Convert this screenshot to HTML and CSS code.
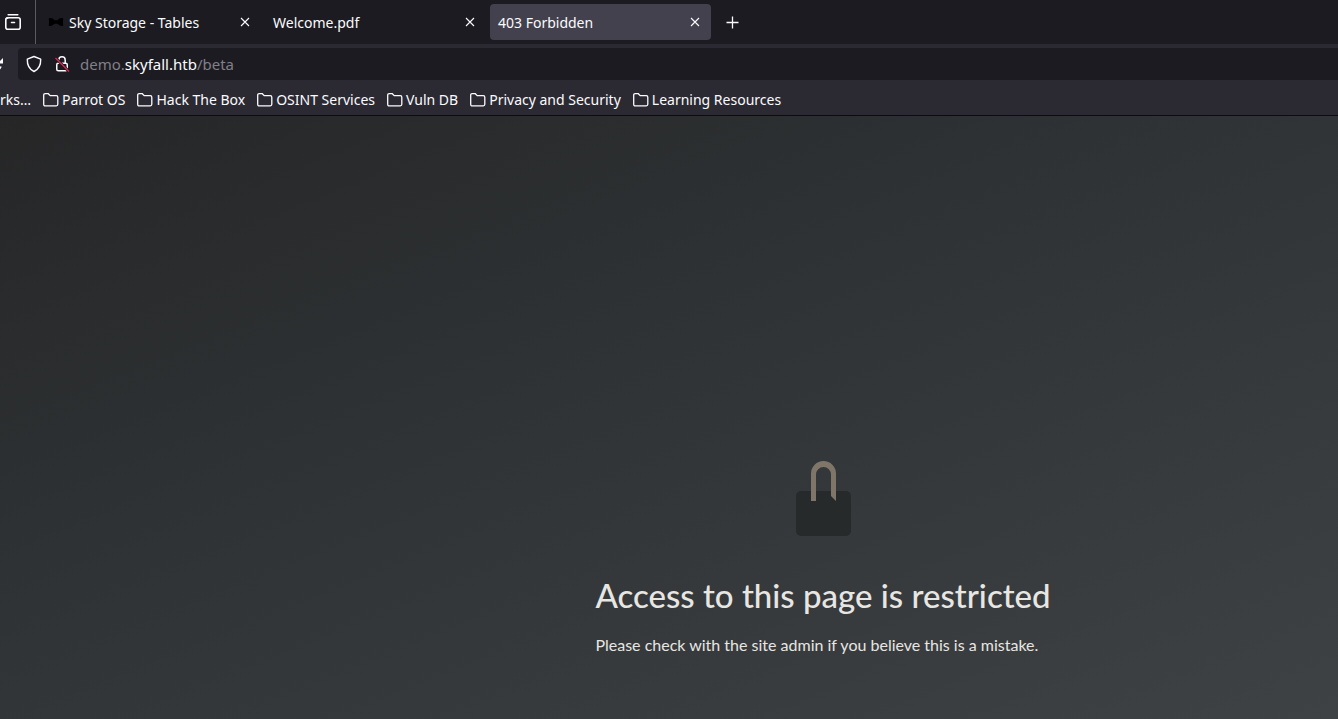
FILE: index.html
```html
<!DOCTYPE html>
<html lang="en">
<head>
<meta charset="utf-8">
<title>403 Forbidden</title>
<link rel="stylesheet" href="styles.css">
</head>
<body>
<header class="browser">
  <div class="tabbar">
    <button class="view-button" aria-label="Firefox View">
      <svg width="18" height="18" viewBox="0 0 18 18" fill="none" stroke="currentColor" stroke-width="1.6" stroke-linecap="round"><path d="M4.200 1.800h9.600"/><rect x="1.800" y="4.800" width="14.400" height="11.400" rx="2"/><path d="M2.500 5.500L4 4.700M7.500 9.500h3"/></svg>
    </button>
    <div class="tab tab-first">
      <svg class="favicon" width="16" height="16" viewBox="0 0 16 16"><path fill="#000" d="M.8 4.200Q4.500 3.500 6.500 6.200h3Q11.500 3.500 15.200 4.200Q14.700 8 15.200 11.800Q11.500 12.500 9.500 9.800h-3Q4.500 12.500.8 11.800Q1.300 8 .8 4.200z"/></svg>
      <span class="tab-label">Sky Storage - Tables</span>
      <button class="close" aria-label="Close tab"><svg width="10" height="10" viewBox="0 0 10 10" stroke="currentColor" stroke-width="1.1"><path d="M1 1l8 8M9 1l-8 8"/></svg></button>
    </div>
    <div class="tab">
      <span class="tab-label">Welcome.pdf</span>
      <button class="close" aria-label="Close tab"><svg width="10" height="10" viewBox="0 0 10 10" stroke="currentColor" stroke-width="1.1"><path d="M1 1l8 8M9 1l-8 8"/></svg></button>
    </div>
    <div class="tab tab-active">
      <span class="tab-label">403 Forbidden</span>
      <button class="close" aria-label="Close tab"><svg width="10" height="10" viewBox="0 0 10 10" stroke="currentColor" stroke-width="1.1"><path d="M1 1l8 8M9 1l-8 8"/></svg></button>
    </div>
    <button class="new-tab" aria-label="New tab"><svg width="13" height="13" viewBox="0 0 13 13" stroke="currentColor" stroke-width="1.300"><path d="M6.500 .5v12M.5 6.500h12"/></svg></button>
  </div>
  <div class="toolbar">
    <button class="reload" aria-label="Reload"><svg width="18" height="16" viewBox="0 0 18 16" fill="none" stroke="currentColor" stroke-width="1.600"><path d="M16 10.500A7 7 0 0 1 4 12"/><path d="M18 2v5.500h-5.500z" fill="currentColor" stroke="none"/></svg></button>
    <div class="urlbar">
      <svg width="16" height="18" viewBox="0 0 16 18" fill="none" stroke="currentColor" stroke-width="1.400" stroke-linejoin="round"><path d="M8 1.500L14.700 4.200Q15 13 8 16.500Q1 13 1.300 4.200z"/></svg>
      <svg width="16" height="18" viewBox="0 0 16 18" fill="none" stroke="currentColor" stroke-width="1.500"><path d="M4.800 8V5a3.200 3.200 0 0 1 6.400 0v3"/><rect x="2.750" y="8.250" width="10.500" height="7.500" rx="1.500"/><path d="M1.500 3L15 16.500" stroke="#1c1b22" stroke-width="3"/><path d="M1.500 3L15 16.500" stroke="#e22850" stroke-width="1.300"/></svg>
      <span class="url">demo.<b>skyfall.htb</b>/beta</span>
    </div>
  </div>
  <nav class="bookmarks">
    <a href="#" class="bookmark bookmark-cut">rks…</a>
    <a href="#" class="bookmark"><svg class="folder" width="16" height="14" viewBox="0 0 16 14"><path d="M.7 11.300V2.200Q.7.7 2.200.7H5.300L7.200 2.700H13.300Q14.800 2.700 14.800 4.200V11.300Q14.800 12.800 13.300 12.800H2.200Q.7 12.800.7 11.300z"/></svg>Parrot OS</a>
    <a href="#" class="bookmark"><svg class="folder" width="16" height="14" viewBox="0 0 16 14"><path d="M.7 11.300V2.200Q.7.7 2.200.7H5.300L7.200 2.700H13.300Q14.800 2.700 14.800 4.200V11.300Q14.800 12.800 13.300 12.800H2.200Q.7 12.800.7 11.300z"/></svg>Hack The Box</a>
    <a href="#" class="bookmark"><svg class="folder" width="16" height="14" viewBox="0 0 16 14"><path d="M.7 11.300V2.200Q.7.7 2.200.7H5.300L7.200 2.700H13.300Q14.800 2.700 14.800 4.200V11.300Q14.800 12.800 13.300 12.800H2.200Q.7 12.800.7 11.300z"/></svg>OSINT Services</a>
    <a href="#" class="bookmark"><svg class="folder" width="16" height="14" viewBox="0 0 16 14"><path d="M.7 11.300V2.200Q.7.7 2.200.7H5.300L7.200 2.700H13.300Q14.800 2.700 14.800 4.200V11.300Q14.800 12.800 13.300 12.800H2.200Q.7 12.800.7 11.300z"/></svg>Vuln DB</a>
    <a href="#" class="bookmark"><svg class="folder" width="16" height="14" viewBox="0 0 16 14"><path d="M.7 11.300V2.200Q.7.7 2.200.7H5.300L7.200 2.700H13.300Q14.800 2.700 14.800 4.200V11.300Q14.800 12.800 13.300 12.800H2.200Q.7 12.800.7 11.300z"/></svg>Privacy and Security</a>
    <a href="#" class="bookmark"><svg class="folder" width="16" height="14" viewBox="0 0 16 14"><path d="M.7 11.300V2.200Q.7.7 2.200.7H5.300L7.200 2.700H13.300Q14.800 2.700 14.800 4.200V11.300Q14.800 12.800 13.300 12.800H2.200Q.7 12.800.7 11.300z"/></svg>Learning Resources</a>
  </nav>
</header>
<main class="page">
  <section class="message">
    <svg class="lock" width="55" height="76" viewBox="0 0 55 76"><rect y="30" width="55" height="45" rx="5" fill="#262a2b"/><path d="M15 40V12.500a12.500 12.500 0 0 1 25 0V40L35 35V13.500a7.500 7.500 0 0 0-15 0V40z" fill="#7f7568"/></svg>
    <h1 class="title">Access to this page is restricted</h1>
    <p class="note">Please check with the site admin if you believe this is a mistake.</p>
  </section>
</main>
</body>
</html>
```
FILE: styles.css
```css
* { box-sizing: border-box; }
body {
  margin: 0;
  min-height: 100vh;
  display: flex;
  flex-direction: column;
  overflow-x: hidden;
  font-family: "Noto Sans", sans-serif;
  font-size: 14px;
  color: #fbfbfe;
  background: #2b2a33;
}
button {
  display: flex;
  align-items: center;
  justify-content: center;
  padding: 0;
  border: 0;
  background: none;
  color: inherit;
  font: inherit;
}
svg { flex: none; display: block; }
.browser { border-bottom: 1px solid #0c0c0d; }
.tabbar {
  display: flex;
  align-items: center;
  height: 44px;
  background: #1c1b22;
}
.view-button {
  width: 36px;
  height: 44px;
  padding-right: 9px;
  border-right: 1px solid #5b5a62;
}
.tab {
  display: flex;
  align-items: center;
  width: 221px;
  height: 36px;
  margin-right: 4px;
  padding: 0 8px;
  border-radius: 4px;
}
.tab-first { margin-left: 4px; }
.favicon { margin-right: 5px; }
.tab-active { background: #42414d; }
.tab-label { flex: 1; white-space: nowrap; }
.close { width: 16px; height: 16px; }
.new-tab { width: 35px; height: 36px; }
.toolbar {
  display: flex;
  align-items: center;
  height: 40px;
}
.reload {
  width: 18px;
  height: 32px;
  justify-content: flex-end;
  padding-right: 15px;
  overflow: hidden;
}
.urlbar {
  flex: 1;
  display: flex;
  align-items: center;
  gap: 12px;
  height: 32px;
  padding-left: 8px;
  border-radius: 4px 0 0 4px;
  background: #1c1b22;
}
.url { margin-left: -2px; font-size: 15px; color: #818087; }
.url b { font-weight: 400; color: #fbfbfe; }
.bookmarks {
  display: flex;
  align-items: center;
  gap: 12px;
  height: 31px;
}
.bookmark {
  display: flex;
  align-items: center;
  gap: 3px;
  color: inherit;
  text-decoration: none;
  white-space: nowrap;
}
.folder { fill: none; stroke: currentColor; stroke-width: 1.3; }
.page {
  flex: 1;
  display: flex;
  flex-direction: column;
  align-items: center;
  justify-content: flex-end;
  padding: 0 0 62px 308px;
  color: #e8e6e3;
  font-family: Lato, sans-serif;
  background: linear-gradient(158deg, #262627, #2e3234 40%, #3e4244);
}
.lock { margin: 0 auto 34px; }
.title {
  margin: 0 0 14px;
  font-size: 33px;
  line-height: 48px;
  font-weight: 500;
}
.note {
  margin: 0;
  font-size: 16px;
  line-height: 24px;
}
```
